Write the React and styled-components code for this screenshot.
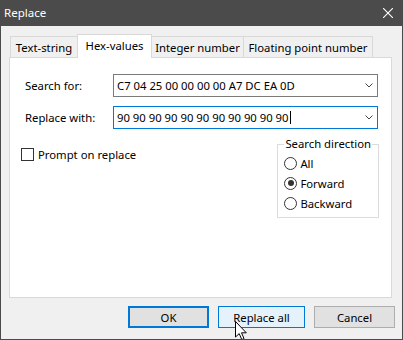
import React from "react";
import styled, { createGlobalStyle } from "styled-components";

const Global = createGlobalStyle`
  html, body { margin: 0; padding: 0; background: #f0f0f0; }
  body { font-family: "Noto Sans", "Open Sans", sans-serif; font-size: 11.3px; }
  * { box-sizing: border-box; }
`;

const Window = styled.div`
  position: relative;
  width: 403px;
  height: 340px;
  border: 1px solid #4b4b4b;
  border-top: 0;
  background: #f0f0f0;
  display: flex;
  flex-direction: column;
  overflow: hidden;
  color: #000;
`;

const TitleBar = styled.div`
  height: 26px;
  flex: none;
  background: #4b4b4b;
  color: #fff;
  display: flex;
  align-items: center;
  justify-content: space-between;
  padding: 0 9px 1px 3px;
  font-size: 11.5px;
`;

const Body = styled.div`
  padding: 8px 0 0 8px;
  display: flex;
  flex-direction: column;
`;

const TabRow = styled.div`
  display: flex;
  align-items: flex-end;
  height: 23px;
  padding-left: 1px;
`;

const Tab = styled.div`
  position: relative;
  width: ${(p) => p.$w}px;
  height: ${(p) => (p.$active ? 24 : 21)}px;
  margin-bottom: ${(p) => (p.$active ? -1 : 0)}px;
  margin-left: ${(p) => (p.$first ? 0 : -1)}px;
  z-index: ${(p) => (p.$active ? 1 : 0)};
  border: 1px solid #d9d9d9;
  border-bottom: 0;
  background: ${(p) => (p.$active ? "#fff" : "#f0f0f0")};
  display: flex;
  align-items: center;
  justify-content: center;
  padding-bottom: ${(p) => (p.$active ? 3 : 0)}px;
  white-space: nowrap;
`;

const Panel = styled.div`
  width: 383px;
  height: 241px;
  border: 1px solid #d9d9d9;
  background: #fff;
  padding: 16px 12px 0 11px;
  display: flex;
  flex-direction: column;
`;

const Form = styled.div`
  display: flex;
  flex-direction: column;
  gap: 9px;
`;

const FieldRow = styled.div`
  display: grid;
  grid-template-columns: 88px 265px;
  align-items: center;
  padding-left: 4px;
`;

const Combo = styled.div`
  height: 23px;
  border: 1px solid ${(p) => (p.$focus ? "#0078d7" : "#7a7a7a")};
  background: #fff;
  display: flex;
  align-items: center;
  justify-content: space-between;
  padding: 0 4px 0 3px;
  white-space: nowrap;
`;

const ComboText = styled.span`
  display: flex;
  align-items: center;
`;

const Caret = styled.span`
  display: inline-block;
  width: 1px;
  height: 13px;
  background: #000;
  margin-left: 1px;
`;

const Options = styled.div`
  display: flex;
  justify-content: space-between;
  align-items: flex-start;
  margin-top: 7px;
`;

const CheckRow = styled.label`
  display: flex;
  align-items: center;
  gap: 4px;
  margin-top: 12px;
  height: 13px;
`;

const CheckBox = styled.span`
  width: 13px;
  height: 13px;
  border: 1px solid #333;
  background: #fff;
  flex: none;
`;

const Group = styled.fieldset`
  width: 97px;
  margin: 0;
  padding: 1px 6px 4px 6px;
  border: 1px solid #dcdcdc;
`;

const Legend = styled.legend`
  padding: 0 1px;
  font-size: 11.3px;
  line-height: 16px;
  white-space: nowrap;
`;

const RadioRow = styled.label`
  height: 20px;
  display: flex;
  align-items: center;
  gap: 3px;
`;

const RadioCircle = styled.span`
  width: 13px;
  height: 13px;
  border-radius: 50%;
  border: 1px solid #333;
  background: #fff;
  flex: none;
  display: flex;
  align-items: center;
  justify-content: center;
  &::after {
    content: "";
    width: 6px;
    height: 6px;
    border-radius: 50%;
    background: ${(p) => (p.$checked ? "#333" : "transparent")};
  }
`;

const Footer = styled.div`
  display: flex;
  justify-content: flex-end;
  gap: 9px;
  margin-top: 8px;
  padding-right: 7px;
`;

const Button = styled.div`
  width: ${(p) => p.$w}px;
  height: 22px;
  display: flex;
  align-items: center;
  justify-content: center;
  background: ${(p) => (p.$hover ? "#e5f1fb" : "#e1e1e1")};
  border: ${(p) =>
    p.$default ? "2px solid #0078d7" : p.$hover ? "1px solid #0078d7" : "1px solid #adadad"};
`;

const Cursor = styled.svg`
  position: absolute;
  left: 234px;
  top: 321px;
`;

function Chevron() {
  return (
    <svg width="8" height="5" viewBox="0 0 8 5">
      <polyline points="0.5,0.5 4,4 7.5,0.5" fill="none" stroke="#444" strokeWidth="1" />
    </svg>
  );
}

export default function App() {
  return (
    <>
      <Global />
      <Window>
        <TitleBar>
          <span>Replace</span>
          <svg width="10" height="10" viewBox="0 0 10 10">
            <path d="M0 0 L10 10 M10 0 L0 10" stroke="#fff" strokeWidth="1.1" />
          </svg>
        </TitleBar>
        <Body>
          <TabRow>
            <Tab $first $w={68}>Text-string</Tab>
            <Tab $active $w={75}>Hex-values</Tab>
            <Tab $w={93}>Integer number</Tab>
            <Tab $w={130}>Floating point number</Tab>
          </TabRow>
          <Panel>
            <Form>
              <FieldRow>
                <span>Search for:</span>
                <Combo>
                  <ComboText>C7 04 25 00 00 00 00 A7 DC EA 0D</ComboText>
                  <Chevron />
                </Combo>
              </FieldRow>
              <FieldRow>
                <span>Replace with:</span>
                <Combo $focus>
                  <ComboText>
                    90 90 90 90 90 90 90 90 90 90 90
                    <Caret />
                  </ComboText>
                  <Chevron />
                </Combo>
              </FieldRow>
            </Form>
            <Options>
              <CheckRow>
                <CheckBox />
                <span>Prompt on replace</span>
              </CheckRow>
              <Group>
                <Legend>Search direction</Legend>
                <RadioRow>
                  <RadioCircle />
                  <span>All</span>
                </RadioRow>
                <RadioRow>
                  <RadioCircle $checked />
                  <span>Forward</span>
                </RadioRow>
                <RadioRow>
                  <RadioCircle />
                  <span>Backward</span>
                </RadioRow>
              </Group>
            </Options>
          </Panel>
          <Footer>
            <Button $w={81} $default>OK</Button>
            <Button $w={87} $hover>Replace all</Button>
            <Button $w={81}>Cancel</Button>
          </Footer>
        </Body>
        <Cursor width="13" height="20" viewBox="0 0 13 20">
          <path
            d="M0.5 0.5 L0.5 16 L4.2 12.6 L6.8 18.6 L9 17.6 L6.5 11.8 L11.3 11.8 Z"
            fill="#fff"
            stroke="#000"
            strokeWidth="1"
            strokeLinejoin="miter"
          />
        </Cursor>
      </Window>
    </>
  );
}
